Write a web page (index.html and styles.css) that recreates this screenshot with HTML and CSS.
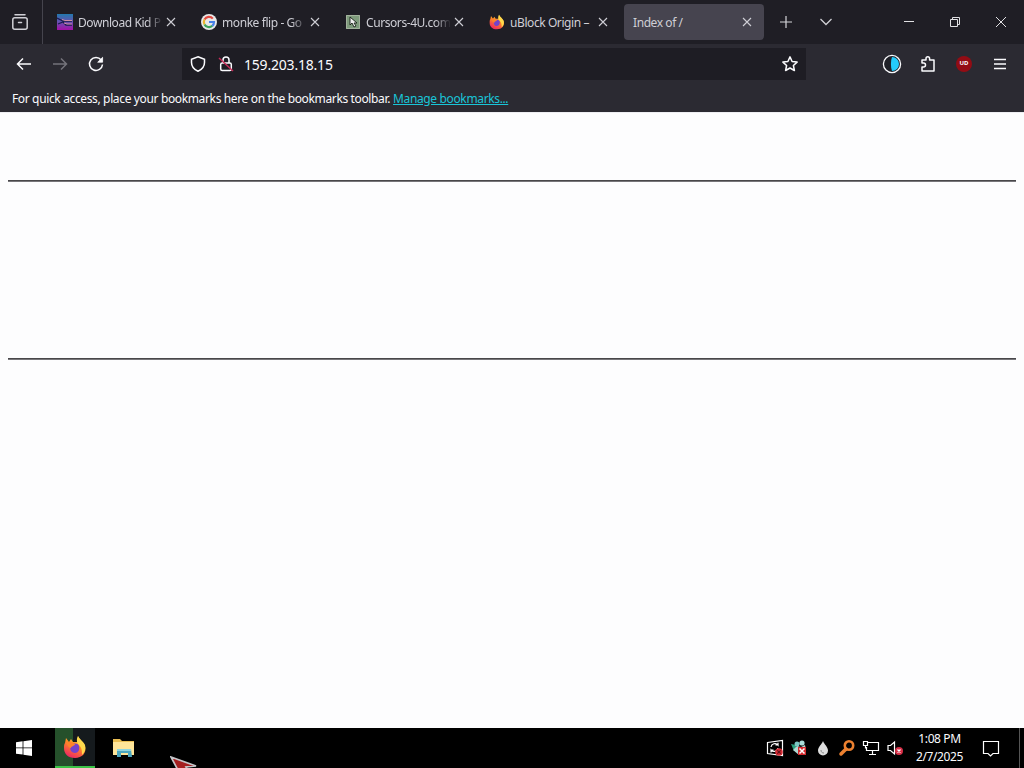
FILE: index.html
```
<!DOCTYPE html>
<html lang="en">
<head>
    <meta charset="UTF-8">
    <title>Index of /</title>
    <link rel="stylesheet" href="styles.css">
</head>
<body>

<svg class="defs" width="0" height="0">
    <defs>
        <linearGradient id="flame" x1="0.8" y1="0" x2="0.3" y2="1">
            <stop offset="0" stop-color="#ffe64f"/>
            <stop offset="0.45" stop-color="#ff8a25"/>
            <stop offset="1" stop-color="#ed2464"/>
        </linearGradient>
        <linearGradient id="game" x1="0" y1="0" x2="0" y2="1">
            <stop offset="0" stop-color="#2279ad"/>
            <stop offset="0.5" stop-color="#6950b0"/>
            <stop offset="1" stop-color="#a510a8"/>
        </linearGradient>
        <symbol id="firefox" viewBox="0 0 24 24">
            <path fill="url(#flame)" d="M2 8l1-5 3 4 2-3 2 3 4 0 1-6c1 3 5 5 7 10 2 7-3 12-10 12S1 19 1 13c0-2 0-4 1-5z"/>
            <path fill="#ffd94c" d="M15 1c1 3 5 5 7 9 1 4 0 7-3 10 0-4 0-7-3-10-2-2-3-5-1-9z"/>
            <path fill="#7542cb" d="M8 10c2-2 7-2 8 1 1 4-1 7-4 7-4 0-6-4-4-8z"/>
            <path fill="#ff822b" d="M3 8c3-2 6-1 9 1 0 2-4 2-4 4-2 0-3-2-5-5z"/>
        </symbol>
        <symbol id="close" viewBox="0 0 10 10">
            <path d="M1 1l8 8M9 1L1 9" fill="none" stroke="currentColor" stroke-width="1.1"/>
        </symbol>
    </defs>
</svg>

<div class="tab-bar">
    <div class="view">
        <svg width="18" height="18" viewBox="0 0 18 18" fill="none" stroke="#d0d0d6" stroke-width="1.5" stroke-linecap="round">
            <path d="M4 1.8h10"/><rect x="1.8" y="4.8" width="14.4" height="11.4" rx="2"/><path d="M7.5 9.5h3"/>
        </svg>
    </div>
    <div class="tab">
        <svg class="favicon" viewBox="0 0 16 16"><path fill="url(#game)" d="M0 0h16v16H0z"/><path d="M0 4l6 3h9M1 10l5-2 3 3h6" fill="none" stroke="#171c50" stroke-width="1.3"/><path d="M5 5.500l3 1h7M7 9l3 1h5" fill="none" stroke="#cf8fa5"/></svg>
        <span class="title fade">Download Kid P</span>
        <svg class="close"><use href="#close"/></svg>
    </div>
    <div class="tab">
        <svg class="favicon" viewBox="0 0 16 16">
            <circle cx="8" cy="8" r="8" fill="#e8e8e8"/>
            <g fill="none" stroke-width="2.2">
                <path stroke="#e04a40" d="M3.5 5.5A5 5 0 0 1 11.8 4.6"/><path stroke="#e9b52e" d="M3.5 5.5A5 5 0 0 0 3.5 10.4"/>
                <path stroke="#3ba35a" d="M3.5 10.4A5 5 0 0 0 11.3 11.8"/><path stroke="#4681e8" d="M11.3 11.8A5 5 0 0 0 13 8H8"/>
            </g>
        </svg>
        <span class="title fade">monke flip - Go</span>
        <svg class="close"><use href="#close"/></svg>
    </div>
    <div class="tab">
        <svg class="favicon" viewBox="0 0 16 16"><path d="M1 1h14v14H1z" fill="#7e9b7c"/><path d="M1.5 1.5h13v13h-13z" fill="none" stroke="#a3b29d"/><path d="M5 3v8l2-2 2 4 2-1-2-3h3z" fill="#eee" stroke="#182018" stroke-width="0.9"/></svg>
        <span class="title fade">Cursors-4U.com</span>
        <svg class="close"><use href="#close"/></svg>
    </div>
    <div class="tab">
        <svg class="favicon"><use href="#firefox"/></svg>
        <span class="title">uBlock Origin –</span>
        <svg class="close"><use href="#close"/></svg>
    </div>
    <div class="tab active">
        <span class="title">Index of /</span>
        <svg class="close"><use href="#close"/></svg>
    </div>
    <svg class="new-tab" width="12" height="12" viewBox="0 0 12 12"><path d="M6 0v12M0 6h12" stroke="#d5d5da" stroke-width="1.2"/></svg>
    <svg class="all-tabs" width="12" height="8" viewBox="0 0 12 8"><path d="M.5 1L6 6.5 11.5 1" fill="none" stroke="#d0d0d5" stroke-width="1.3"/></svg>
    <div class="window-buttons">
        <svg width="10" height="10" viewBox="0 0 10 10"><path d="M0 4.5h10"/></svg>
        <svg width="10" height="10" viewBox="0 0 10 10"><path d="M.5 2.5h7v7h-7zM2.5 2V.5h7v7H8"/></svg>
        <svg width="10" height="10" viewBox="0 0 10 10"><path d="M0 0l10 10M10 0L0 10"/></svg>
    </div>
</div>

<div class="nav-bar">
    <div class="nav-buttons">
        <svg width="16" height="16" viewBox="0 0 16 16"><path d="M15 8H1.5M7 2.5L1.5 8 7 13.5"/></svg>
        <svg class="disabled" width="16" height="16" viewBox="0 0 16 16"><path d="M1 8h13.5M9 2.5L14.5 8 9 13.5"/></svg>
        <svg width="16" height="16" viewBox="0 0 16 16"><path d="M13.2 4A6.5 6.5 0 1 0 14.5 8.5"/><path class="solid" d="M14.6 1.3v4.9H9.7z"/></svg>
    </div>
    <div class="url-bar">
        <svg width="16" height="16" viewBox="0 0 16 16"><path d="M8 .8l6.5 2.4v3.3c0 4-2.5 7-6.5 8.8-4-1.8-6.5-4.8-6.5-8.8V3.2z"/></svg>
        <svg width="16" height="16" viewBox="0 0 16 16"><rect x="2.7" y="7" width="10.6" height="7.6" rx="1.5"/><path d="M5 7V4a3 3 0 0 1 6 0v3"/><path d="M1 2l14 13" stroke="#c52b58"/></svg>
        <span class="address">159.203.18.15</span>
        <svg width="16" height="16" viewBox="0 0 16 16"><path d="M8 .9l2.1 4.6 5 .6-3.7 3.4 1 5L8 12l-4.4 2.5 1-5L.9 6.1l5-.6z" stroke-linejoin="round"/></svg>
    </div>
    <div class="extensions">
        <svg width="20" height="20" viewBox="0 0 20 20"><circle cx="10" cy="10" r="8.6" fill="#202128" stroke-width="1.3"/><path d="M10 3a7 7 0 0 1 0 14c-1.4-4-1.4-10 0-14z" fill="#24cbfb" stroke="none"/></svg>
        <svg width="16" height="18" viewBox="0 0 16 18"><path d="M2 8V5h4V3.500a1.800 1.800 0 0 1 3.600 0V5H14v11H2v-4h1.500a1.800 1.800 0 0 0 0-4z" stroke-linejoin="round"/></svg>
        <span class="ublock">UD</span>
        <svg width="12" height="12" viewBox="0 0 12 12"><path d="M0 1.5h12M0 6h12M0 10.5h12" stroke-width="1.3"/></svg>
    </div>
</div>

<div class="bookmarks">
    <span class="hint">For quick access, place your bookmarks here on the bookmarks toolbar.</span>
    <a class="manage" href="#">Manage bookmarks...</a>
</div>

<div class="page">
    <div class="rule"></div>
    <div class="rule"></div>
</div>

<div class="taskbar">
    <div class="start">
        <svg width="16" height="16" viewBox="0 0 16 16" fill="#fff"><path d="M0 2.2l6.6-.9v6.2H0zM7.4 1.2L16 0v7.5H7.4zM0 8.3h6.6v6.3L0 13.7zM7.4 8.3H16V16l-8.6-1.2z"/></svg>
    </div>
    <div class="app running"><svg width="24" height="24"><use href="#firefox"/></svg></div>
    <div class="app">
        <svg width="22" height="18" viewBox="0 0 22 18"><path fill="#eabe53" d="M0 0h7l2 2h12v5H0z"/><path fill="#ffe599" d="M0 3h21v13H0z"/><path fill="#4ba6bf" d="M4 10h14l1 8h-4v-4H8v4H4z"/><path fill="#8fd5df" d="M4 10h14v2H4z"/></svg>
    </div>
    <svg class="cursor" width="30" height="12" viewBox="0 0 30 12"><path d="M1 1l25 9-10 1 3 5-9 2z" fill="#a51f20" stroke="#c5c5c9" stroke-width="1.7"/></svg>
    <div class="tray">
        <svg width="18" height="18" viewBox="0 0 18 18" fill="none" stroke="#fff" stroke-width="1.2"><path d="M1.5 3.5l15-2v15l-15-2z"/><path d="M5 8a4 4 0 0 1 7-2V3.8M12 6H9.5M12 9a4 4 0 0 1-7 2v2.5M5 11h2.5"/><circle cx="13" cy="13" r="3.8" fill="#d72c35" stroke="none"/><path d="M11.3 11.3l3.4 3.4m0-3.4l-3.4 3.4" stroke="#5d1119"/></svg>
        <svg width="18" height="18" viewBox="0 0 18 18"><path d="M1 5l5 1 1 5-3 1z" fill="#299d7b"/><circle cx="7" cy="5" r="2.5" fill="#7ac6c2"/><circle cx="12" cy="4" r="2.6" fill="#a9ddda"/><path d="M3 11l4-4 4 1 4-2 1 5-7 5z" fill="#b2d8d3"/><path d="M8 8h8v8H8z" fill="#d2292c"/><path d="M9.5 9.5l5 5m0-5l-5 5" stroke="#fff" stroke-width="1.5"/></svg>
        <svg width="18" height="18" viewBox="0 0 18 18"><path d="M9 2c1 3 5 6 5 9.500a5 5 0 0 1-10 0C4 8 8 5 9 2z" fill="#dedede"/><path d="M7 11c0 2 1 3 3 3" stroke="#888" fill="none"/></svg>
        <svg width="18" height="18" viewBox="0 0 18 18" fill="none" stroke="#ed8130"><circle cx="11" cy="6.5" r="4.2" stroke-width="2.6"/><path d="M8 10l-5 5" stroke-width="3.5" stroke-linecap="round"/></svg>
        <svg width="18" height="18" viewBox="0 0 18 18" fill="none" stroke="#fff" stroke-width="1.2"><path d="M6 3.5h10.500v8H4.500V8M10.500 12v3.500M7 15.500h7M1.500 2.500h4v4h-4zM3.500 6.500v3"/></svg>
        <svg width="18" height="18" viewBox="0 0 18 18" fill="none" stroke="#fff" stroke-width="1.2"><path d="M2 6.5h2.500L8.500 3v12l-4-3.500H2z"/><circle cx="13" cy="12" r="4" fill="#d72f47" stroke="none"/><path d="M11.5 10.5l3 3m0-3l-3 3" stroke-width="1.3"/></svg>
    </div>
    <div class="clock">
        <span class="time">1:08 PM</span>
        <span class="date">2/7/2025</span>
    </div>
    <svg class="notifications" width="18" height="17" viewBox="0 0 18 17"><path d="M1.5 1.5h15v12H11L8.500 16 6 13.500H1.500z" fill="none" stroke="#fff" stroke-width="1.2"/></svg>
    <div class="show-desktop"></div>
</div>

</body>
</html>
```
FILE: styles.css
```
* {
    box-sizing: border-box;
}
body {
    margin: 0;
    width: 1024px;
    height: 768px;
    overflow: hidden;
    display: flex;
    flex-direction: column;
    font-family: "Noto Sans", "Open Sans", sans-serif;
    font-size: 12px;
    color: #fbfbfe;
    background-color: #fdfdfe;
}
svg {
    display: block;
    flex: none;
}
.defs {
    position: absolute;
}
.tab-bar {
    display: flex;
    align-items: center;
    height: 44px;
    flex: none;
    background-color: #1f1e25;
}
.view {
    width: 43px;
    height: 44px;
    padding: 13px 0 0 11px;
    margin-right: 5px;
    border-right: 1px solid #45444d;
}
.tab {
    display: flex;
    align-items: center;
    width: 140px;
    height: 36px;
    margin-right: 4px;
    padding: 0 12px 0 9px;
    border-radius: 4px;
    color: #cfcfd6;
}
.favicon {
    width: 16px;
    height: 16px;
    margin-right: 5px;
}
.title {
    flex: 1;
    min-width: 0;
    white-space: nowrap;
    letter-spacing: -0.42px;
}
.fade {
    mask-image: linear-gradient(to left, transparent, #000 16px);
}
.close {
    width: 10px;
    height: 10px;
    margin-left: 3px;
}
.active {
    background-color: #46444f;
}
.new-tab {
    margin-left: 12px;
}
.all-tabs {
    margin-left: 28px;
}
.window-buttons {
    display: flex;
    gap: 36px;
    margin-left: auto;
    margin-right: 18px;
}
.window-buttons svg {
    fill: none;
    stroke: #e1e1e4;
    stroke-width: 1;
}
.nav-bar {
    display: flex;
    align-items: center;
    height: 40px;
    flex: none;
    background-color: #2b2a32;
}
.nav-bar svg {
    fill: none;
    stroke: #fbfbfe;
    stroke-width: 1.5;
}
.nav-buttons {
    display: flex;
    gap: 20px;
    width: 182px;
    padding-left: 16px;
}
.nav-buttons .disabled {
    stroke: #74737b;
}
.solid {
    fill: #fbfbfe;
    stroke-width: 0.8;
}
.url-bar {
    display: flex;
    align-items: center;
    gap: 12px;
    width: 624px;
    height: 32px;
    padding: 0 8px;
    background-color: #1e1d24;
}
.address {
    flex: 1;
    margin-left: -2px;
    font-size: 14px;
    letter-spacing: -0.2px;
}
.extensions {
    display: flex;
    align-items: center;
    flex: 1;
    gap: 18px;
    padding-left: 76px;
}
.ublock {
    width: 16px;
    height: 16px;
    margin: 0 4px 0 2px;
    border-radius: 50%;
    background-color: #930c14;
    font-size: 6px;
    font-weight: bold;
    line-height: 15px;
    text-align: center;
}
.bookmarks {
    display: flex;
    gap: 3px;
    height: 28px;
    flex: none;
    padding: 6px 12px;
    line-height: 17px;
    white-space: nowrap;
    letter-spacing: -0.36px;
    background-color: #2b2a32;
}
.manage {
    color: #19c5d8;
}
.page {
    flex: 1;
    padding: 67px 8px 0;
    border-top: 1px solid #eeeef2;
    background-color: #fdfdfe;
}
.rule {
    height: 2px;
    margin-bottom: 176px;
    border-top: 1px solid #48474a;
    border-bottom: 1px solid #77767a;
}
.taskbar {
    position: relative;
    display: flex;
    align-items: center;
    height: 40px;
    flex: none;
    background-color: #000;
}
.start {
    width: 55px;
    padding-left: 16px;
}
.app {
    display: flex;
    align-items: center;
    justify-content: center;
    width: 40px;
    height: 40px;
    margin-right: 9px;
}
.running {
    background: linear-gradient(to right, #25502b 18px, #151a1d 18px);
    border-bottom: 2px solid #3bc447;
}
/* pointer tip showing above the bottom edge */
.cursor {
    position: absolute;
    left: 170px;
    bottom: 0;
}
.tray {
    display: flex;
    gap: 6px;
    margin-left: auto;
}
.clock {
    width: 71px;
    display: flex;
    flex-direction: column;
    align-items: center;
    line-height: 18px;
    letter-spacing: -0.4px;
}
.notifications {
    margin: 0 19px 0 7px;
}
.show-desktop {
    width: 5px;
    height: 40px;
    border-left: 1px solid #555;
}
```
